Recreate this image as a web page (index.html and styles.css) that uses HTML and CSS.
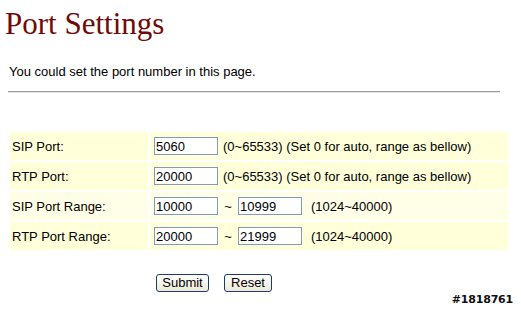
FILE: index.html
```html
<!DOCTYPE html>
<html>
<head>
<meta charset="utf-8">
<title>Port Settings</title>
<link rel="stylesheet" href="styles.css">
</head>
<body>
<div class="page">
  <h1 class="title">Port Settings</h1>
  <p class="intro">You could set the port number in this page.</p>
  <hr class="sep">
  <table class="form">
    <tr class="row">
      <td class="label">SIP Port:</td>
      <td class="field"><input class="num" type="text" value="5060"><span class="hint">(0~65533) (Set 0 for auto, range as bellow)</span></td>
    </tr>
    <tr class="row">
      <td class="label">RTP Port:</td>
      <td class="field"><input class="num" type="text" value="20000"><span class="hint">(0~65533) (Set 0 for auto, range as bellow)</span></td>
    </tr>
    <tr class="row light">
      <td class="label">SIP Port Range:</td>
      <td class="field"><input class="num" type="text" value="10000"><span class="tilde">~</span><input class="num" type="text" value="10999"><span class="hint wide">(1024~40000)</span></td>
    </tr>
    <tr class="row">
      <td class="label">RTP Port Range:</td>
      <td class="field"><input class="num" type="text" value="20000"><span class="tilde">~</span><input class="num" type="text" value="21999"><span class="hint wide">(1024~40000)</span></td>
    </tr>
  </table>
  <div class="actions">
    <button class="btn submit" type="button">Submit</button>
    <button class="btn reset" type="button">Reset</button>
  </div>
  <div class="mark">#1818761</div>
</div>
</body>
</html>
```
FILE: styles.css
```css
html, body {
  margin: 0;
  padding: 0;
  background: #ffffff;
}
body {
  font-family: "Liberation Sans", Arial, sans-serif;
  font-size: 13px;
  color: #000;
}
.page {
  position: relative;
  height: 311px;
  padding: 0 8px;
  box-sizing: border-box;
  overflow: hidden;
}
.title {
  margin: 6px 0 0 -3px;
  font-family: "Liberation Serif", "Times New Roman", serif;
  font-weight: normal;
  font-size: 31px;
  line-height: 36px;
  color: #700a0a;
}
.intro {
  margin: 22px 0 0 1px;
  line-height: 15px;
}
.sep {
  margin: 12px 0 0 0;
  width: 492px;
  height: 0;
  border: 0;
  border-top: 1px solid #9c9c9c;
  border-bottom: 1px solid #e4e4e4;
}
.form {
  margin-top: 37px;
  border-collapse: separate;
  border-spacing: 2px;
  width: 502px;
}
.row td {
  background: #ffffda;
  height: 28px;
  padding: 0;
  vertical-align: middle;
}
.row.light td {
  background: #ffffe8;
}
.label {
  width: 136px;
  padding-left: 2px !important;
}
.field {
  padding-left: 4px !important;
  white-space: nowrap;
}
.num {
  box-sizing: border-box;
  width: 64px;
  height: 18px;
  margin: 0;
  padding: 0 1px;
  border: 1px solid #7f9db9;
  font-family: "Liberation Sans", Arial, sans-serif;
  font-size: 13px;
  vertical-align: middle;
  background: #fff;
}
.hint {
  margin-left: 5px;
  vertical-align: middle;
}
.hint.wide {
  margin-left: 9px;
}
.tilde {
  display: inline-block;
  width: 20px;
  text-align: center;
  vertical-align: middle;
}
.actions {
  margin-top: 22px;
  padding-left: 148px;
  display: flex;
  gap: 15px;
}
.btn {
  height: 18px;
  padding: 0;
  border: 1px solid #1c3c6a;
  border-radius: 3px;
  background: linear-gradient(#ffffff, #ece9d8);
  font-family: "Liberation Sans", Arial, sans-serif;
  font-size: 13px;
  color: #000;
  line-height: 16px;
}
.submit { width: 53px; }
.reset { width: 48px; }
.mark {
  position: absolute;
  right: 8px;
  bottom: 5px;
  font-family: "DejaVu Sans", sans-serif;
  font-weight: bold;
  font-size: 11px;
  color: #111;
  text-shadow: 1px 0 #fff, -1px 0 #fff, 0 1px #fff, 0 -1px #fff;
  letter-spacing: -0.2px;
}
```
